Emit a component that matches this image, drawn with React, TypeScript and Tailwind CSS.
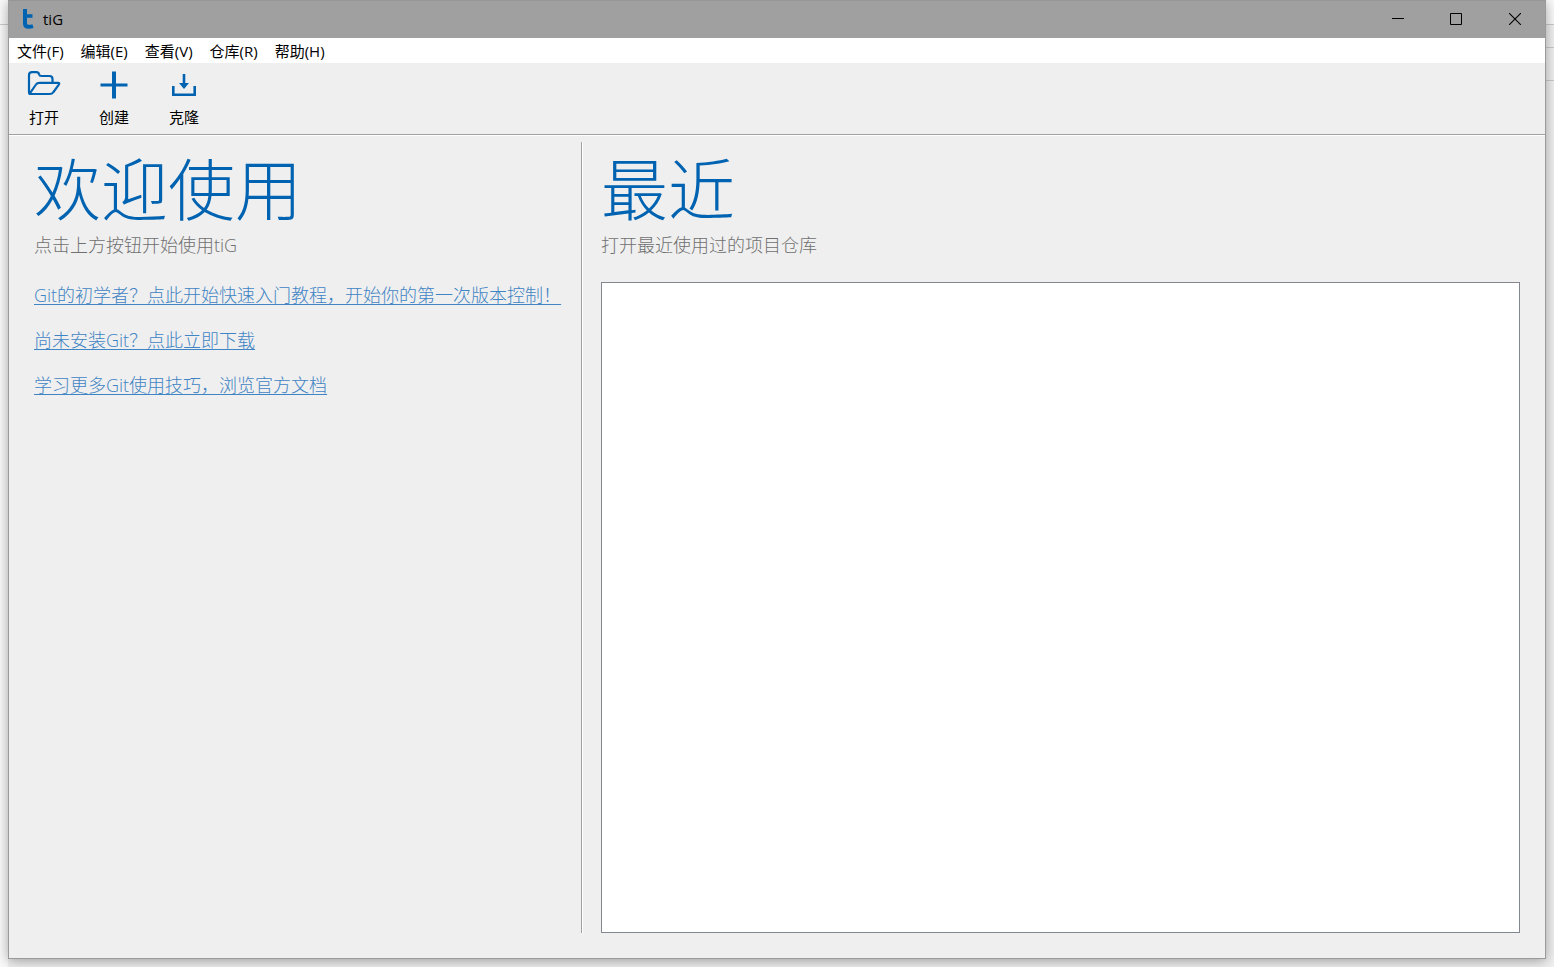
import React from 'react';

interface ToolButtonProps {
  label: string;
  children: React.ReactNode;
}

interface PanelTitleProps {
  title: string;
  subtitle: string;
}

const menus = ['文件(F)', '编辑(E)', '查看(V)', '仓库(R)', '帮助(H)'];

const links = [
  'Git的初学者？点此开始快速入门教程，开始你的第一次版本控制！',
  '尚未安装Git？点此立即下载',
  '学习更多Git使用技巧，浏览官方文档',
];

const ToolButton: React.FC<ToolButtonProps> = ({ label, children }) => (
  <button type="button" className="flex w-[70px] flex-col items-center">
    <span className="flex h-11 items-center">{children}</span>
    <span className="text-[15px] leading-5 text-black">{label}</span>
  </button>
);

const PanelTitle: React.FC<PanelTitleProps> = ({ title, subtitle }) => (
  <header className="pt-[3px]">
    <h1 className="text-[67px] leading-[88px] font-light text-[#0063b1]">{title}</h1>
    <p className="text-lg leading-6 font-light text-[#707070]">{subtitle}</p>
  </header>
);

const TitleBar = () => (
  <div className="flex h-[38px] shrink-0 items-start justify-between border-t border-[#969696] bg-[#a0a0a0]">
    <div className="flex h-9 items-center gap-2 pl-3">
      <svg width="14" height="22" viewBox="0 0 14 22" fill="none" stroke="#0063b1" strokeWidth="4" aria-hidden="true">
        <path d="M4 1V15.5Q4 18.8 7.5 18.8Q10 18.8 12 18.2" strokeLinejoin="round" />
        <path d="M2 8H11.5" strokeWidth="3.5" />
      </svg>
      <span className="text-[15px] leading-5 text-black">tiG</span>
    </div>
    <div className="flex h-9">
      <button type="button" aria-label="最小化" className="flex w-[58px] items-center justify-center">
        <svg width="12" height="12" viewBox="0 0 12 12" stroke="#000">
          <path d="M0 5.5H12" />
        </svg>
      </button>
      <button type="button" aria-label="最大化" className="flex w-[58px] items-center justify-center">
        <svg width="12" height="12" viewBox="0 0 12 12" fill="none" stroke="#000">
          <path d="M.5 .5H11.5V11.5H.5Z" />
        </svg>
      </button>
      <button type="button" aria-label="关闭" className="flex w-[60px] items-center justify-center">
        <svg width="12" height="12" viewBox="0 0 12 12" stroke="#000" strokeWidth="1.1">
          <path d="M0 0L12 12M12 0L0 12" />
        </svg>
      </button>
    </div>
  </div>
);

const MenuBar = () => (
  <nav className="flex h-[25px] shrink-0 items-center gap-px bg-white">
    {menus.map((item) => (
      <button key={item} type="button" className="px-2 text-[15px] leading-5 text-black">
        {item}
      </button>
    ))}
  </nav>
);

const Toolbar = () => (
  <div className="flex h-[72px] shrink-0 items-start border-b border-[#a0a0a0]">
    <ToolButton label="打开">
      <svg width="34" height="28" viewBox="0 0 34 28" fill="none" stroke="#0063b1" strokeWidth="2.2" strokeLinejoin="round">
        <path d="M3 23Q2 23 2 21V4Q2 1.2 5 1.2H9.5Q11.5 1.2 12 3.2Q12.5 5 14.5 5H22.5Q25.5 5 25.5 8V11.5" />
        <path d="M3 22.2L9 13.5Q10 11.8 12.5 11.8H31Q33 11.8 31.8 13.6L26.5 21Q25.2 23 22.5 23H4.5Q2.5 23 3 22.2Z" />
      </svg>
    </ToolButton>
    <ToolButton label="创建">
      <svg width="28" height="28" viewBox="0 0 28 28" stroke="#0063b1" strokeWidth="4">
        <path d="M14 0.5V27.5" />
        <path d="M0.5 14H27.5" strokeWidth="3" />
      </svg>
    </ToolButton>
    <ToolButton label="克隆">
      <svg width="24" height="22" viewBox="0 0 24 22" fill="none" stroke="#0063b1" strokeWidth="2.6">
        <path d="M1.3 12V20.7H22.7V12" />
        <path d="M12 0V12" />
        <path d="M7 9H17L12 15Z" fill="#0063b1" stroke="none" />
      </svg>
    </ToolButton>
  </div>
);

export default function App() {
  return (
    <div className="flex h-screen overflow-hidden bg-[#f0f0f0] font-['Open_Sans','Noto_Sans_CJK_SC',sans-serif]">
      {/* slivers of the window behind */}
      <div className="w-2 shrink-0 bg-[#fafafa]">
        <div className="h-[25px] border-b border-[#cccccc]" />
      </div>
      <div className="z-10 mb-2 flex min-w-0 flex-1 flex-col border-x border-b border-[#9a9a9a] bg-[#efefef] shadow-[0_2px_12px_rgba(0,0,0,0.35)]">
        <TitleBar />
        <MenuBar />
        <Toolbar />
        <main className="grid min-h-0 flex-1 grid-cols-[572fr_964fr] border-t border-white pt-[6px] pb-[25px]">
          <section className="pl-[25px]">
            <PanelTitle title="欢迎使用" subtitle="点击上方按钮开始使用tiG" />
            <div className="flex flex-col items-start gap-[21px] pt-[26px]">
              {links.map((text) => (
                <a
                  key={text}
                  href="#"
                  className="text-lg leading-6 font-light whitespace-nowrap text-[#3f84c4] underline decoration-1 underline-offset-2"
                >
                  {text}
                </a>
              ))}
            </div>
          </section>
          <section className="flex flex-col border-l border-[#a0a0a0] pr-[25px] pl-[19px] shadow-[inset_1px_0_0_#ffffff]">
            <PanelTitle title="最近" subtitle="打开最近使用过的项目仓库" />
            <div className="mt-[25px] flex-1 border border-[#828790] bg-white" />
          </section>
        </main>
      </div>
      <div className="w-2 shrink-0 bg-[#f0f0f0]">
        <div className="h-[25px] border-b border-[#cccccc] bg-[#fafafa]" />
        <div className="h-[23px] border-b border-[#cccccc]" />
        <div className="h-[33px] border-b border-[#cccccc]" />
      </div>
    </div>
  );
}
